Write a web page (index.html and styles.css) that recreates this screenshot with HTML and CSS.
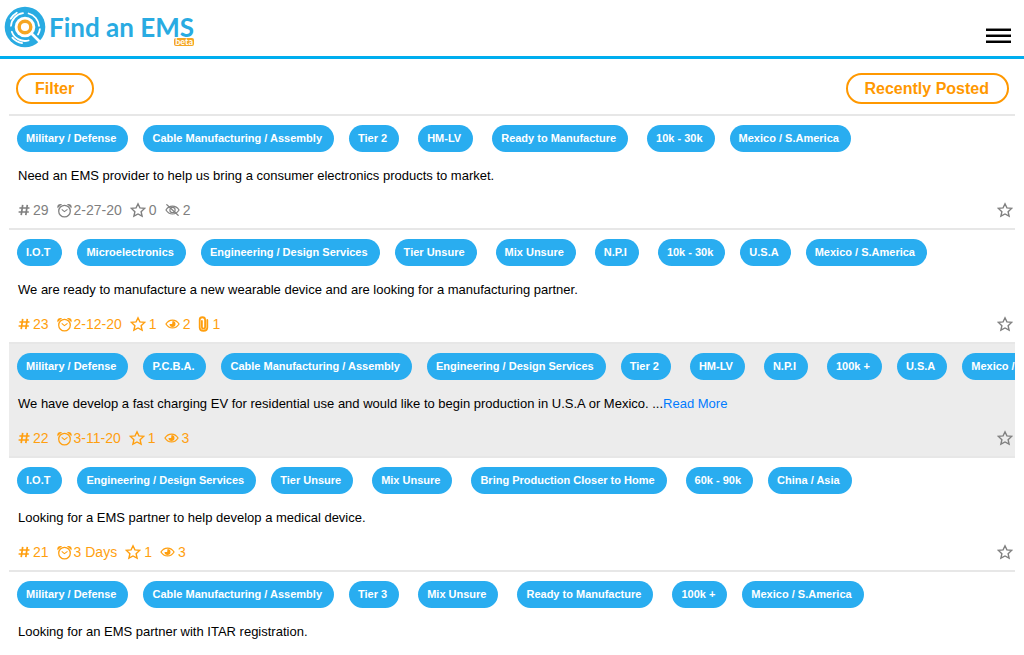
FILE: index.html
```html
<!DOCTYPE html>
<html lang="en">
<head>
    <meta charset="UTF-8">
    <meta name="viewport" content="width=device-width, initial-scale=1.0">
    <title>Find an EMS</title>
    <link rel="stylesheet" href="styles.css">
</head>
<body>
<!-- icon sprite -->
<svg class="sprite" aria-hidden="true">
    <symbol id="hash" viewBox="0 0 12 12">
        <path d="M4.700.8 3.200 11.200M9.300.8 7.800 11.200M1.400 4H11.500M.6 8h10.200" fill="none" stroke="currentColor" stroke-width="1.7"/>
    </symbol>
    <symbol id="clock" viewBox="0 0 14 14">
        <path d="M.6 5C-.4 2.600 1 .2 4.800 1L.6 5ZM13.400 5C14.400 2.600 13 .2 9.200 1L13.400 5Z" fill="currentColor"/>
        <circle cx="7" cy="7.600" r="5.400" fill="none" stroke="currentColor" stroke-width="1.200"/>
        <path d="m4.400 6 2.500 2 2.900-2" fill="none" stroke="currentColor"/>
    </symbol>
    <symbol id="star" viewBox="0 0 16 16">
        <path d="m8 1.800 1.900 4.100 4.700.5-3.500 3.300 1 4.500L8 12l-4.100 2.200 1-4.500-3.500-3.300 4.700-.5L8 1.800Z" fill="none" stroke="currentColor" stroke-width="1.400"/>
    </symbol>
    <symbol id="eye" viewBox="0 0 16 12">
        <path d="M1 6c3.400-5.600 10.600-5.600 14 0-3.400 5.600-10.600 5.600-14 0Z" fill="none" stroke="currentColor" stroke-width="1.300"/>
        <path d="M8 2.800A3.200 3.200 0 1 1 4.800 6L7.600 6Z" fill="currentColor"/>
    </symbol>
    <symbol id="eye-off" viewBox="0 0 16 12">
        <path d="M1 6c3.400-5.600 10.600-5.600 14 0-3.400 5.600-10.600 5.600-14 0Z" fill="none" stroke="currentColor" stroke-width="1.200"/>
        <circle cx="8" cy="6" r="2.800" fill="none" stroke="currentColor" stroke-width="1.200"/>
        <path d="m1.500 0 13 12" stroke="currentColor" stroke-width="1.400"/>
    </symbol>
    <symbol id="clip" viewBox="0 0 10 16">
        <path d="M3.400 5v6c0 2.200 3.200 2.200 3.200 0V3.800C6.600.4 1.200.4 1.200 3.800V11.500c0 4.500 7.600 4.500 7.600 0V4" fill="none" stroke="currentColor" stroke-width="1.800" stroke-linecap="round"/>
    </symbol>
</svg>

<header class="header">
    <a class="logo" href="#">
        <svg class="logo-mark" viewBox="0 0 42 42" aria-hidden="true">
            <circle cx="21" cy="21" r="20.300" fill="#29abe2"/>
            <circle cx="21" cy="21" r="10.300" fill="#fff"/>
            <g fill="none" stroke="#fff" stroke-width="1.800" stroke-linecap="round">
                <path d="M7 19.800A14 14 0 0 1 19 7.100"/>
                <path d="M24.600 7.500A14 14 0 0 1 35 19.800"/>
                <path d="M6.700 12.800A16.500 16.500 0 0 1 12.800 6.700"/>
                <path d="M35.900 23.100A15 15 0 0 1 34 28.500"/>
                <path d="M24.600 34.500A14 14 0 0 1 7.800 25.800"/>
                <path d="M18.100 37.200A16.500 16.500 0 0 1 8.400 31.600"/>
                <path d="m28 28 9 9" stroke-width="2.600"/>
            </g>
            <circle cx="21" cy="21" r="5.800" fill="none" stroke="#f5a623" stroke-width="3.400"/>
        </svg>
        <span class="logo-text">
            <span class="name">Find an EMS</span>
            <span class="beta">beta</span>
        </span>
    </a>
    <button class="menu" aria-label="Menu"><span></span><span></span><span></span></button>
</header>

<main class="content">
    <div class="toolbar">
        <button class="outline-btn">Filter</button>
        <button class="outline-btn">Recently Posted</button>
    </div>

    <article class="post muted">
        <div class="tags">
            <div class="tag-group"><span class="tag">Military / Defense</span><span class="tag">Cable Manufacturing / Assembly</span><span class="tag">Tier 2</span></div>
            <div class="tag-group"><span class="tag">HM-LV</span></div>
            <div class="tag-group"><span class="tag">Ready to Manufacture</span></div>
            <div class="tag-group"><span class="tag">10k - 30k</span><span class="tag">Mexico / S.America</span></div>
        </div>
        <p class="description">Need an EMS provider to help us bring a consumer electronics products to market.</p>
        <div class="meta">
            <span class="stat"><svg class="i-hash"><use href="#hash"/></svg>29</span>
            <span class="stat date"><svg class="i-clock"><use href="#clock"/></svg>2-27-20</span>
            <span class="stat"><svg class="i-star"><use href="#star"/></svg>0</span>
            <span class="stat"><svg class="i-eye"><use href="#eye-off"/></svg>2</span>
            <button class="favorite" aria-label="Favorite"><svg class="i-star"><use href="#star"/></svg></button>
        </div>
    </article>

    <article class="post">
        <div class="tags">
            <div class="tag-group"><span class="tag">I.O.T</span><span class="tag">Microelectronics</span><span class="tag">Engineering / Design Services</span><span class="tag">Tier Unsure</span></div>
            <div class="tag-group"><span class="tag">Mix Unsure</span></div>
            <div class="tag-group"><span class="tag">N.P.I</span></div>
            <div class="tag-group"><span class="tag">10k - 30k</span><span class="tag">U.S.A</span><span class="tag">Mexico / S.America</span></div>
        </div>
        <p class="description">We are ready to manufacture a new wearable device and are looking for a manufacturing partner.</p>
        <div class="meta">
            <span class="stat"><svg class="i-hash"><use href="#hash"/></svg>23</span>
            <span class="stat date"><svg class="i-clock"><use href="#clock"/></svg>2-12-20</span>
            <span class="stat"><svg class="i-star"><use href="#star"/></svg>1</span>
            <span class="stat"><svg class="i-eye"><use href="#eye"/></svg>2</span>
            <span class="stat"><svg class="i-clip"><use href="#clip"/></svg>1</span>
            <button class="favorite" aria-label="Favorite"><svg class="i-star"><use href="#star"/></svg></button>
        </div>
    </article>

    <article class="post active">
        <div class="tags">
            <div class="tag-group"><span class="tag">Military / Defense</span><span class="tag">P.C.B.A.</span><span class="tag">Cable Manufacturing / Assembly</span><span class="tag">Engineering / Design Services</span><span class="tag">Tier 2</span></div>
            <div class="tag-group"><span class="tag">HM-LV</span></div>
            <div class="tag-group"><span class="tag">N.P.I</span></div>
            <div class="tag-group"><span class="tag">100k +</span><span class="tag">U.S.A</span><span class="tag">Mexico / S.America</span></div>
        </div>
        <p class="description">We have develop a fast charging EV for residential use and would like to begin production in U.S.A or Mexico. ...<a href="#">Read More</a></p>
        <div class="meta">
            <span class="stat"><svg class="i-hash"><use href="#hash"/></svg>22</span>
            <span class="stat date"><svg class="i-clock"><use href="#clock"/></svg>3-11-20</span>
            <span class="stat"><svg class="i-star"><use href="#star"/></svg>1</span>
            <span class="stat"><svg class="i-eye"><use href="#eye"/></svg>3</span>
            <button class="favorite" aria-label="Favorite"><svg class="i-star"><use href="#star"/></svg></button>
        </div>
    </article>

    <article class="post">
        <div class="tags">
            <div class="tag-group"><span class="tag">I.O.T</span><span class="tag">Engineering / Design Services</span><span class="tag">Tier Unsure</span></div>
            <div class="tag-group"><span class="tag">Mix Unsure</span></div>
            <div class="tag-group"><span class="tag">Bring Production Closer to Home</span></div>
            <div class="tag-group"><span class="tag">60k - 90k</span><span class="tag">China / Asia</span></div>
        </div>
        <p class="description">Looking for a EMS partner to help develop a medical device.</p>
        <div class="meta">
            <span class="stat"><svg class="i-hash"><use href="#hash"/></svg>21</span>
            <span class="stat date"><svg class="i-clock"><use href="#clock"/></svg>3 Days</span>
            <span class="stat"><svg class="i-star"><use href="#star"/></svg>1</span>
            <span class="stat"><svg class="i-eye"><use href="#eye"/></svg>3</span>
            <button class="favorite" aria-label="Favorite"><svg class="i-star"><use href="#star"/></svg></button>
        </div>
    </article>

    <article class="post">
        <div class="tags">
            <div class="tag-group"><span class="tag">Military / Defense</span><span class="tag">Cable Manufacturing / Assembly</span><span class="tag">Tier 3</span></div>
            <div class="tag-group"><span class="tag">Mix Unsure</span></div>
            <div class="tag-group"><span class="tag">Ready to Manufacture</span></div>
            <div class="tag-group"><span class="tag">100k +</span><span class="tag">Mexico / S.America</span></div>
        </div>
        <p class="description">Looking for an EMS partner with ITAR registration.</p>
    </article>
</main>
</body>
</html>
```
FILE: styles.css
```css
* {
    box-sizing: border-box;
}
body {
    margin: 0;
    font-family: "Liberation Sans", Arial, sans-serif;
    color: #000;
    background: #fff;
}
button {
    font-family: inherit;
    background: none;
    border: none;
    padding: 0;
    cursor: pointer;
}
.sprite {
    display: none;
}

.header {
    display: flex;
    justify-content: space-between;
    align-items: flex-end;
    padding: 6px 13px 8px 4px;
    border-bottom: 3px solid #00aeef;
}
.logo {
    display: flex;
    align-items: flex-end;
    gap: 3px;
    color: #29abe2;
    text-decoration: none;
}
.logo-mark {
    width: 42px;
    height: 42px;
}
.logo-text {
    display: flex;
    flex-direction: column;
    align-items: flex-end;
    padding-bottom: 2px;
    font-family: Lato, sans-serif;
    font-weight: bold;
}
.name {
    font-size: 26px;
    line-height: 22px;
}
.beta {
    padding: 0 1px;
    border-radius: 2px;
    background: #f5a623;
    color: #fff;
    font-size: 9px;
    line-height: 8px;
}
.menu {
    display: flex;
    flex-direction: column;
    gap: 3px;
    width: 25px;
    margin-bottom: 5px;
}
.menu span {
    height: 3px;
    border-top: 1px solid #888;
    background: #000;
}

.content {
    padding: 0 9px;
}
.toolbar {
    display: flex;
    justify-content: space-between;
    padding: 14px 6px 10px 7px;
}
.outline-btn {
    height: 31px;
    padding: 0 18px 0 17px;
    border: 2px solid #ff9800;
    border-radius: 16px;
    color: #ff9800;
    font-size: 16px;
    font-weight: bold;
}

.post {
    padding: 9px 0 8px 8px;
    border-top: 2px solid #e7e7e7;
    overflow: hidden;
}
.post.active {
    background: #ececec;
}
.tags {
    display: flex;
    gap: 19px;
}
.tag-group {
    display: flex;
    gap: 15px;
}
.tag {
    padding: 0 12px 0 9px;
    border-radius: 14px;
    background: #29adf0;
    color: #fff;
    font-size: 11px;
    font-weight: bold;
    line-height: 27px;
    white-space: nowrap;
}
.description {
    margin: 14px 0 0 1px;
    font-size: 13px;
    line-height: 20px;
}
.description a {
    color: #007bff;
    text-decoration: none;
}
.meta {
    display: flex;
    align-items: center;
    gap: 8px;
    height: 20px;
    margin-top: 14px;
    padding: 0 2px 0 1px;
    color: #ff9f0f;
    font-size: 14px;
}
.muted .meta {
    color: #808080;
}
.stat {
    display: flex;
    align-items: center;
    gap: 3px;
}
.date {
    gap: 2px;
}
.i-hash {
    width: 12px;
    height: 12px;
}
.i-clock {
    width: 15px;
    height: 15px;
}
.i-star {
    width: 16px;
    height: 16px;
}
.i-eye {
    width: 15px;
    height: 12px;
}
.i-clip {
    width: 11px;
    height: 16px;
}
.meta .favorite {
    display: flex;
    margin-left: auto;
    color: #808080;
}
```
